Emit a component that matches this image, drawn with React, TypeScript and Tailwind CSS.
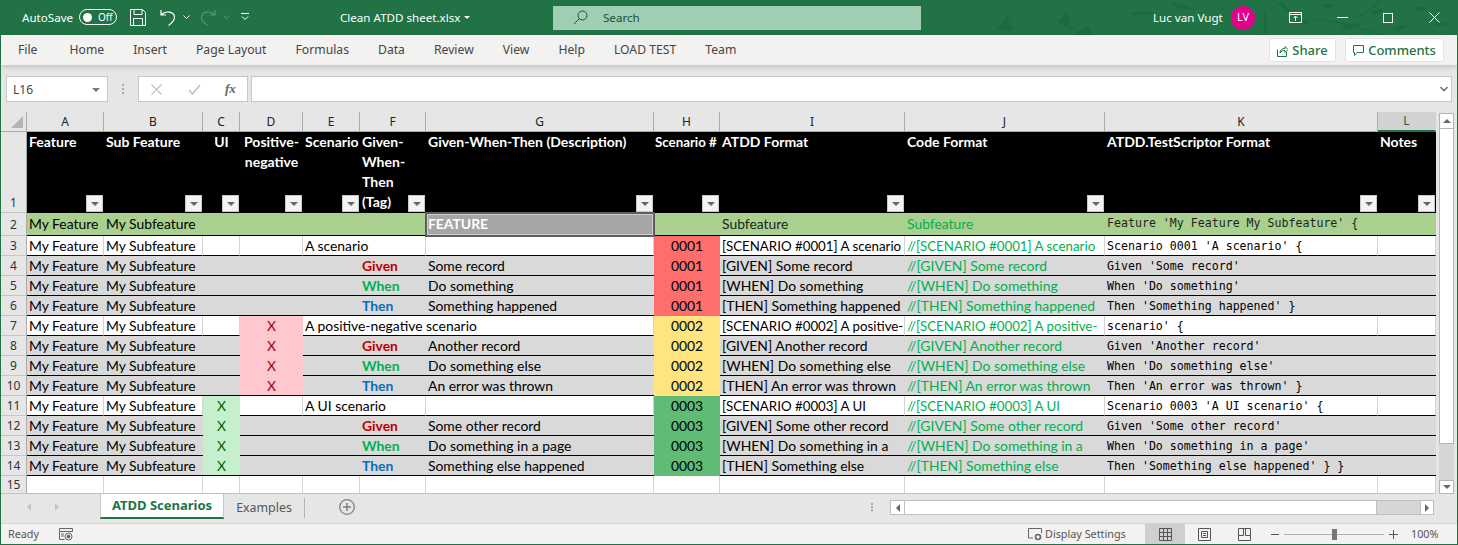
import clsx from "clsx";

const ui = "font-['Noto_Sans',sans-serif]";
const sheetFont = "font-['Lato',sans-serif]";
const mono = "font-['DejaVu_Sans_Mono',monospace]";

const columns = [
  { key: "A", title: "Feature" },
  { key: "B", title: "Sub Feature" },
  { key: "C", title: "UI", center: true },
  { key: "D", title: "Positive-\nnegative", center: true },
  { key: "E", title: "Scenario" },
  { key: "F", title: "Given-\nWhen-\nThen\n(Tag)" },
  { key: "G", title: "Given-When-Then (Description)" },
  { key: "H", title: "Scenario #" },
  { key: "I", title: "ATDD Format" },
  { key: "J", title: "Code Format" },
  { key: "K", title: "ATDD.TestScriptor Format" },
  { key: "L", title: "Notes" },
];

type Row = {
  n: number;
  c?: boolean;
  d?: boolean;
  e?: string;
  span?: number;
  tag?: "Given" | "When" | "Then";
  g?: string;
  id: string;
  i: string;
  k: string;
};

const rows: Row[] = [
  { n: 3, e: "A scenario", span: 2, id: "0001", i: "[SCENARIO #0001] A scenario", k: "Scenario 0001 'A scenario' {" },
  { n: 4, tag: "Given", g: "Some record", id: "0001", i: "[GIVEN] Some record", k: "Given 'Some record'" },
  { n: 5, tag: "When", g: "Do something", id: "0001", i: "[WHEN] Do something", k: "When 'Do something'" },
  { n: 6, tag: "Then", g: "Something happened", id: "0001", i: "[THEN] Something happened", k: "Then 'Something happened' }" },
  { n: 7, d: true, e: "A positive-negative scenario", span: 3, id: "0002", i: "[SCENARIO #0002] A positive-", k: "scenario' {" },
  { n: 8, d: true, tag: "Given", g: "Another record", id: "0002", i: "[GIVEN] Another record", k: "Given 'Another record'" },
  { n: 9, d: true, tag: "When", g: "Do something else", id: "0002", i: "[WHEN] Do something else", k: "When 'Do something else'" },
  { n: 10, d: true, tag: "Then", g: "An error was thrown", id: "0002", i: "[THEN] An error was thrown", k: "Then 'An error was thrown' }" },
  { n: 11, c: true, e: "A UI scenario", span: 2, id: "0003", i: "[SCENARIO #0003] A UI", k: "Scenario 0003 'A UI scenario' {" },
  { n: 12, c: true, tag: "Given", g: "Some other record", id: "0003", i: "[GIVEN] Some other record", k: "Given 'Some other record'" },
  { n: 13, c: true, tag: "When", g: "Do something in a page", id: "0003", i: "[WHEN] Do something in a", k: "When 'Do something in a page'" },
  { n: 14, c: true, tag: "Then", g: "Something else happened", id: "0003", i: "[THEN] Something else", k: "Then 'Something else happened' } }" },
];

const tagColor = { Given: "text-[#c00000]", When: "text-[#00b050]", Then: "text-[#0070c0]" };
const idColor: Record<string, string> = { "0001": "bg-[#ff6d6d]", "0002": "bg-[#ffe480]", "0003": "bg-[#60bb76]" };

const RowNum = ({ n, bottom }: { n: number; bottom?: boolean }) => (
  <div className={clsx(ui, "flex justify-center bg-[#e6e6e6] border-r border-b border-r-[#ababab] border-b-[#c6c6c6] text-[12px] text-[#333]", bottom ? "items-end" : "items-center pt-px")}>{n}</div>
);

const FilterBtn = () => (
  <span className="absolute right-px bottom-px flex h-[17px] w-[17px] items-center justify-center border border-[#c9c9c9] bg-[#f3f3f3]">
    <span className="h-0 w-0 border-x-[4px] border-t-[4px] border-x-transparent border-t-[#666]" />
  </span>
);

const Cell = ({
  gray,
  className,
  tone = "text-black",
  size = "text-[13.9px]",
  font = sheetFont,
  children,
}: {
  gray: boolean;
  className?: string;
  tone?: string;
  size?: string;
  font?: string;
  children?: React.ReactNode;
}) => (
  <div
    className={clsx(
      font,
      size,
      tone,
      "overflow-hidden whitespace-nowrap border-b border-b-black px-[2px] leading-[20px]",
      gray ? "bg-[#d9d9d9]" : "border-r border-r-[#d4d4d4] bg-white",
      className
    )}
  >
    {children}
  </div>
);

const SheetRow = ({ row }: { row: Row }) => {
  const gray = !!row.tag;
  const code = "//" + row.i;
  // the long scenario lines just fit their column in the reference
  const fitSize = row.e ? "text-[13.3px]" : "text-[13.9px]";
  return (
    <>
      <RowNum n={row.n} />
      <Cell gray={gray}>My Feature</Cell>
      <Cell gray={gray}>My Subfeature</Cell>
      {row.c ? (
        <div className={clsx(sheetFont, "bg-[#c6efce] text-center text-[13.9px] leading-[20px] text-[#006100]", row.n === 14 && "border-b border-b-black")}>X</div>
      ) : (
        <Cell gray={gray} />
      )}
      {row.d ? (
        <div className={clsx(sheetFont, "bg-[#ffc7ce] text-center text-[13.9px] leading-[20px] text-[#9c0006]", row.n === 10 && "border-b border-b-black")}>X</div>
      ) : (
        <Cell gray={gray} />
      )}
      <Cell gray={gray} className={row.span === 3 ? "col-span-3" : row.span === 2 ? "col-span-2" : ""}>
        {row.e}
      </Cell>
      {!row.span && (
        <Cell gray={gray} className="font-bold" tone={row.tag ? tagColor[row.tag] : undefined}>
          {row.tag}
        </Cell>
      )}
      {row.span !== 3 && <Cell gray={gray}>{row.g}</Cell>}
      <div className={clsx(sheetFont, "text-center text-[13.9px] leading-[20px] text-black", idColor[row.id])}>{row.id}</div>
      <Cell gray={gray} size={fitSize}>
        {row.i}
      </Cell>
      <Cell gray={gray} size={fitSize} tone="text-[#00b050]">
        {code}
      </Cell>
      <Cell gray={gray} font={mono} size="text-[11.6px]">
        {row.k}
      </Cell>
      <Cell gray={gray} />
    </>
  );
};

const Leaves = () => (
  <svg className="absolute inset-0" width="1456" height="35" viewBox="0 0 1456 35" fill="#1d6a3f">
    <path d="M996 28c4-1 8-8 10-14 1 6 3 12 6 16-5 1-11 1-16-2z" />
    <path d="M1055 20c5 1 8-4 9-10 3 5 5 10 4 16 3 1 4 2 5 3-6 0-12-3-18-9z" />
    <path d="M1076 32c4-4 8-6 12-5 2 3 3 5 3 8h-15z" />
    <path d="M1130 12h22v3h-22zM1170 4c8-2 16 0 22 5-8 2-16 0-22-5z" />
    <path d="M1262 8c3 6 5 14 3 24l-3 3c2-10 1-19 0-27z" />
    <path d="M1278 2c5 1 9 5 11 10-5 0-9-4-11-10zM1292 22c6-3 12-3 18 0-6 3-12 3-18 0zM1320 6c5-3 10-3 15-1-4 4-10 4-15 1z" />
    <path d="M1340 28c6-5 13-6 20-3-6 5-14 6-20 3zM1368 14c4-4 9-6 14-5-3 5-8 7-14 5zM1390 30c5-5 11-6 17-4-5 5-11 6-17 4zM1412 8c5-2 10-2 14 1-4 3-10 3-14-1zM1432 24c5-3 11-3 16 0-5 3-11 3-16 0z" />
    <path d="M1272 0c12 10 28 18 50 20s40 8 60 15h-4c-18-6-36-12-56-14S1284 10 1270 0zM1380 0c-6 8-14 14-26 18l-1-1c11-4 19-10 25-17z" />
  </svg>
);

const TitleBar = () => (
  <div className={clsx(ui, "relative flex h-[35px] items-center bg-[#217346] text-[11.6px] text-white")}>
    <Leaves />
    <div className="relative flex items-center pl-[21px]">
      <span className="w-[57px]">AutoSave</span>
      <span className="flex h-[16px] w-[38px] items-center rounded-full border border-white pl-[3px]">
        <span className="h-[9px] w-[9px] rounded-full bg-white" />
        <span className="ml-[6px] text-[10px]">Off</span>
      </span>
      <svg className="ml-[13px]" width="16" height="17" viewBox="0 0 16 17" fill="none" stroke="#fff">
        <path d="M.5.5h12l3 3v13H.5zM4 .5v5h8v-5M3.5 16.5v-7h9v7" />
      </svg>
      <svg className="ml-[14px]" width="16" height="17" viewBox="0 0 16 17" fill="none" stroke="#fff" strokeWidth="1.2">
        <path d="M1 1v5h5M1.2 6C5 1.5 14 2 14.5 8c.2 4-3 6-6 8.500" />
      </svg>
      <svg className="ml-[7px]" width="7" height="4" viewBox="0 0 7 4" fill="none" stroke="#fff">
        <path d="M.5.500 3.500 3.500 6.500.5" />
      </svg>
      <svg className="ml-[10px] opacity-40" width="16" height="17" viewBox="0 0 16 17" fill="none" stroke="#9fd0b3" strokeWidth="1.2">
        <path d="M15 1v5h-5M14.800 6C11 1.500 2 2 1.500 8c-.2 4 3 6 6 8.500" />
      </svg>
      <svg className="ml-[7px] opacity-40" width="7" height="4" viewBox="0 0 7 4" fill="none" stroke="#9fd0b3">
        <path d="M.5.500 3.500 3.500 6.500.5" />
      </svg>
      <svg className="ml-[11px]" width="8" height="8" viewBox="0 0 8 8" fill="none" stroke="#fff">
        <path d="M0 .5h8M1 3.500 4 6.500l3-3" />
      </svg>
      <span className="ml-[91px] w-[120px] whitespace-nowrap">Clean ATDD sheet.xlsx</span>
      <span className="ml-[4px] h-0 w-0 border-x-[3px] border-t-[3px] border-x-transparent border-t-white" />
    </div>
    <div className="relative ml-[83px] flex h-[24px] w-[368px] items-center bg-[#a0ceb4] pl-[20px] text-[#14522f]">
      <svg width="15" height="15" viewBox="0 0 15 15" fill="none" stroke="#14522f">
        <circle cx="9.500" cy="5.500" r="4.500" />
        <path d="M6.300 8.700 1 14" />
      </svg>
      <span className="ml-[15px]">Search</span>
    </div>
    <span className="relative ml-[232px] w-[72px] whitespace-nowrap">Luc van Vugt</span>
    <span className="relative ml-[6px] flex h-[24px] w-[24px] items-center justify-center rounded-full bg-[#e3008c] text-[11px]">LV</span>
    <svg className="relative ml-[34px]" width="14" height="11" viewBox="0 0 14 11" fill="none" stroke="#fff">
      <path d="M.5.5h12v10H.5zM.5 2.500h12M6.500 9V4.500M4.500 6l2-2 2 2" />
    </svg>
    <span className="relative ml-[34px] h-px w-[11px] bg-white" />
    <span className="relative ml-[35px] h-[10px] w-[10px] border border-white" />
    <svg className="relative ml-[36px]" width="11" height="11" viewBox="0 0 11 11" stroke="#fff">
      <path d="M.5.500l10 10M10.500.5l-10 10" />
    </svg>
  </div>
);

const MenuBar = () => (
  <div className={clsx(ui, "relative z-10 flex h-[30px] items-center bg-[#f3f2f1] pl-[17px] text-[12.2px] text-[#444] shadow-[0_2px_5px_rgba(0,0,0,0.16)]")}>
    <div className="flex gap-[29px] whitespace-nowrap pt-px">
      {["File", "Home", "Insert", "Page Layout", "Formulas", "Data", "Review", "View", "Help", "LOAD TEST", "Team"].map((t) => (
        <span key={t} className={t === "File" ? "mr-[3px]" : ""}>
          {t}
        </span>
      ))}
    </div>
    <div className="ml-auto mr-[13px] flex gap-[9px] text-[13px] font-medium text-[#217346]">
      <span className="flex h-[24px] w-[67px] items-center justify-center gap-[4px] rounded-[2px] border border-[#e3e3e3] bg-white pt-px">
        <svg width="11" height="12" viewBox="0 0 11 12" fill="none" stroke="#217346">
          <path d="M.5 4.500v7h9V7M3 8c0-3 2-4.500 5-4.500V1.500l3 3-3 3V5.500C6 5.500 4 6 3 8z" />
        </svg>
        Share
      </span>
      <span className="flex h-[24px] w-[99px] items-center justify-center gap-[4px] rounded-[2px] border border-[#e3e3e3] bg-white pt-px">
        <svg width="11" height="11" viewBox="0 0 11 11" fill="none" stroke="#217346">
          <path d="M.5.500h10v7H4l-2.500 3v-3h-1z" />
        </svg>
        Comments
      </span>
    </div>
  </div>
);

const FormulaBar = () => (
  <div className="flex h-[47px] items-start pl-[5px] pr-[5px] pt-[11px]">
    <div className={clsx(ui, "flex h-[26px] w-[102px] items-center justify-between border border-[#c6c6c6] bg-white px-[6px] pt-px text-[12px] text-[#444]")}>
      L16
      <span className="mr-[1px] h-0 w-0 border-x-[4px] border-t-[4px] border-x-transparent border-t-[#777]" />
    </div>
    <div className="mx-[14px] mt-[8px] flex flex-col gap-[2px]">
      <span className="h-[2px] w-[2px] bg-[#aaa]" />
      <span className="h-[2px] w-[2px] bg-[#aaa]" />
      <span className="h-[2px] w-[2px] bg-[#aaa]" />
    </div>
    <div className="flex h-[26px] w-[110px] items-center border border-[#c6c6c6] bg-white pl-[12px]">
      <svg width="11" height="11" viewBox="0 0 11 11" stroke="#c4c4c4" strokeWidth="1.400">
        <path d="M.5.500l10 10M10.500.5l-10 10" />
      </svg>
      <svg className="ml-[26px]" width="13" height="11" viewBox="0 0 13 11" fill="none" stroke="#c4c4c4" strokeWidth="1.800">
        <path d="M1 6l3.500 4L12 1" />
      </svg>
      <span className="ml-[24px] font-['Liberation_Serif',serif] text-[13px] italic font-bold text-[#666]">fx</span>
    </div>
    <div className="ml-[3px] flex h-[26px] flex-1 items-center justify-end border border-[#c6c6c6] bg-white pr-[3px]">
      <svg width="8" height="6" viewBox="0 0 8 6" fill="none" stroke="#777" strokeWidth="1.600">
        <path d="M.5 1 4 4.500 7.500 1" />
      </svg>
    </div>
  </div>
);

const VScroll = () => (
  <div className="flex flex-col items-center bg-[#e6e6e6] pl-[3px] pr-[3px] pt-px">
    <span className="flex h-[16px] w-[15px] shrink-0 items-center justify-center border border-[#b5b5b5] bg-white">
      <span className="h-0 w-0 border-x-[4px] border-b-[4px] border-x-transparent border-b-[#666]" />
    </span>
    <span className="h-[315px] w-[15px] shrink-0 border-x border-b border-[#b5b5b5] bg-white" />
    <span className="w-[15px] flex-1 bg-[#d6d6d6]" />
    <span className="flex h-[14px] w-[15px] shrink-0 items-center justify-center border border-[#b5b5b5] bg-white">
      <span className="h-0 w-0 border-x-[4px] border-t-[4px] border-x-transparent border-t-[#666]" />
    </span>
  </div>
);

const Sheet = () => (
  <div className="flex h-[382px]">
    <div className="grid w-[1435px] shrink-0 grid-cols-[26px_77px_99px_37px_63px_57px_66px_228px_66px_185px_200px_273px_58px] grid-rows-[20px_81px_23px_repeat(12,20px)_18px]">
      <div className="flex items-end justify-end border-r border-b border-r-[#ababab] border-b-[#ababab] bg-[#e6e6e6] p-[3px]">
        <span className="h-0 w-0 border-t-[12px] border-r-[12px] border-t-transparent border-r-[#b5b5b5]" />
      </div>
      {columns.map((c) => (
        <div
          key={c.key}
          className={clsx(
            ui,
            "flex items-center justify-center border-r border-b text-[12px]",
            c.key === "L" ? "border-b-2 border-r-[#d2d2d2] border-b-[#217346] bg-[#d2d2d2] text-[#1c5f3a]" : "border-r-[#ababab] border-b-[#ababab] bg-[#e6e6e6] text-[#222]"
          )}
        >
          {c.key}
        </div>
      ))}
      <RowNum n={1} bottom />
      {columns.map((c) => (
        <div
          key={c.key}
          className={clsx(
            sheetFont,
            "relative whitespace-pre bg-black font-bold leading-[20px] text-white",
            c.key === "H" ? "pl-px text-[13.3px]" : "pl-[2px] text-[14px]",
            c.center && "pr-[2px] text-center"
          )}
        >
          {c.title}
          <FilterBtn />
        </div>
      ))}
      <RowNum n={2} />
      <div className={clsx(sheetFont, "border-b border-b-black bg-[#a9d08e] px-[2px] text-[13.9px] leading-[22px] whitespace-nowrap text-black")}>My Feature</div>
      <div className={clsx(sheetFont, "col-span-5 border-b border-b-black bg-[#a9d08e] px-[2px] text-[13.9px] leading-[22px] text-black")}>My Subfeature</div>
      <div className={clsx(sheetFont, "relative z-10 -m-px border-[2px] border-[#5f5f5f] bg-[#a6a6a6] px-[1px] text-[13.9px] font-bold leading-[20px] text-white outline outline-1 -outline-offset-[3px] outline-[#cfcfcf]")}>FEATURE</div>
      <div className="border-b border-b-black bg-[#a9d08e]" />
      <div className={clsx(sheetFont, "border-b border-b-black bg-[#a9d08e] px-[2px] text-[13.9px] leading-[22px] text-[#1f1f1f]")}>Subfeature</div>
      <div className={clsx(sheetFont, "border-b border-b-black bg-[#a9d08e] px-[2px] text-[13.9px] leading-[22px] text-[#00b050]")}>Subfeature</div>
      <div className={clsx(mono, "border-b border-b-black bg-[#a9d08e] px-[2px] text-[11.6px] leading-[21px] whitespace-nowrap text-[#1f1f1f]")}>Feature 'My Feature My Subfeature' {"{"}</div>
      <div className="border-b border-b-black bg-[#a9d08e]" />
      {rows.map((r) => (
        <SheetRow key={r.n} row={r} />
      ))}
      <RowNum n={15} />
      {columns.map((c) => (
        <div key={c.key} className="border-r border-b border-r-[#d4d4d4] border-b-[#c0c0c0] bg-white" />
      ))}
    </div>
    <VScroll />
  </div>
);

const TabBar = () => (
  <div className={clsx(ui, "flex h-[29px] items-start bg-[#e6e6e6] text-[12.4px]")}>
    <span className="ml-[26px] mt-[9px] h-0 w-0 border-y-[4px] border-r-[4px] border-y-transparent border-r-[#c4c4c4]" />
    <span className="ml-[24px] mt-[9px] h-0 w-0 border-y-[4px] border-l-[4px] border-y-transparent border-l-[#c4c4c4]" />
    <div className="ml-[41px] flex h-[25px] w-[124px] items-center justify-center border-x border-x-[#c6c6c6] border-b-2 border-b-[#217346] bg-white text-[13px] font-bold text-[#217346]">
      ATDD Scenarios
    </div>
    <div className="mt-[4px] flex h-[20px] w-[81px] items-center justify-center border-r border-r-[#b5b5b5] text-[#555]">Examples</div>
    <svg className="ml-[34px] mt-[5px]" width="16" height="16" viewBox="0 0 16 16" fill="none" stroke="#808080">
      <circle cx="8" cy="8" r="7.300" strokeWidth="1.300" />
      <path d="M4 8h8M8 4v8" strokeWidth="1.500" />
    </svg>
    <div className="ml-[516px] mt-[9px] flex flex-col gap-[1px]">
      <span className="h-[2px] w-[2px] bg-[#aaa]" />
      <span className="h-[2px] w-[2px] bg-[#aaa]" />
      <span className="h-[2px] w-[2px] bg-[#aaa]" />
    </div>
    <div className="ml-[17px] mt-[6px] flex h-[15px] w-[544px] border border-[#c0c0c0] bg-[#d6d6d6]">
      <span className="flex w-[14px] items-center justify-center border-r border-r-[#c0c0c0] bg-white">
        <span className="h-0 w-0 border-y-[4px] border-r-[4px] border-y-transparent border-r-[#666]" />
      </span>
      <span className="w-[472px] border-r border-r-[#c0c0c0] bg-white" />
      <span className="flex-1" />
      <span className="flex w-[13px] items-center justify-center border-l border-l-[#c0c0c0] bg-white">
        <span className="h-0 w-0 border-y-[4px] border-l-[4px] border-y-transparent border-l-[#666]" />
      </span>
    </div>
  </div>
);

const StatusBar = () => (
  <div className={clsx(ui, "flex h-[21px] items-center border-t border-t-[#d4d4d4] bg-[#f3f2f1] text-[10.8px] text-[#555]")}>
    <span className="ml-[7px]">Ready</span>
    <svg className="ml-[20px]" width="14" height="13" viewBox="0 0 14 13" fill="none" stroke="#666">
      <path d="M.5.500h13v3H.5zM.5 3.500v8h5M2 6h3M2 8h3" />
      <circle cx="9.500" cy="8.500" r="3.500" />
      <circle cx="9.500" cy="8.500" r="1.500" fill="#666" />
    </svg>
    <svg className="ml-[955px]" width="15" height="13" viewBox="0 0 15 13" fill="none" stroke="#666">
      <path d="M5 10H.5V.5h13V5" />
      <circle cx="10" cy="9" r="2.500" strokeWidth="1.600" />
    </svg>
    <span className="ml-[2px] w-[82px] whitespace-nowrap">Display Settings</span>
    <span className="ml-[18px] flex h-[20px] w-[40px] items-center justify-center bg-[#cfcfcf]">
      <svg width="13" height="13" viewBox="0 0 13 13" fill="none" stroke="#555">
        <path d="M.5.500h12v12H.5zM.5 4.500h12M.5 8.500h12M4.500.5v12M8.500.5v12" />
      </svg>
    </span>
    <svg className="ml-[13px]" width="13" height="13" viewBox="0 0 13 13" fill="none" stroke="#555">
      <path d="M.5.500h12v12H.5zM3.500 3.500h6v6h-6zM5 5.500h3M5 7.500h3" />
    </svg>
    <svg className="ml-[27px]" width="13" height="13" viewBox="0 0 13 13" fill="none" stroke="#555">
      <path d="M.5.500h12v12H.5zM.5 7.500h5v-7M7.500.5v7h5" />
    </svg>
    <span className="ml-[20px] h-px w-[8px] bg-[#555]" />
    <div className="relative ml-[5px] h-px w-[100px] bg-[#b0b0b0]">
      <span className="absolute left-[48px] -top-[5px] h-[11px] w-[5px] bg-[#777]" />
    </div>
    <span className="relative ml-[5px] h-[9px] w-[9px]">
      <span className="absolute left-0 top-[4px] h-px w-[9px] bg-[#555]" />
      <span className="absolute left-[4px] top-0 h-[9px] w-px bg-[#555]" />
    </span>
    <span className="ml-[13px]">100%</span>
  </div>
);

export default function App() {
  return (
    <div className="flex h-[545px] w-[1458px] flex-col overflow-hidden border-x border-b border-[#217346] bg-[#e6e6e6]">
      <TitleBar />
      <MenuBar />
      <FormulaBar />
      <Sheet />
      <TabBar />
      <StatusBar />
    </div>
  );
}
